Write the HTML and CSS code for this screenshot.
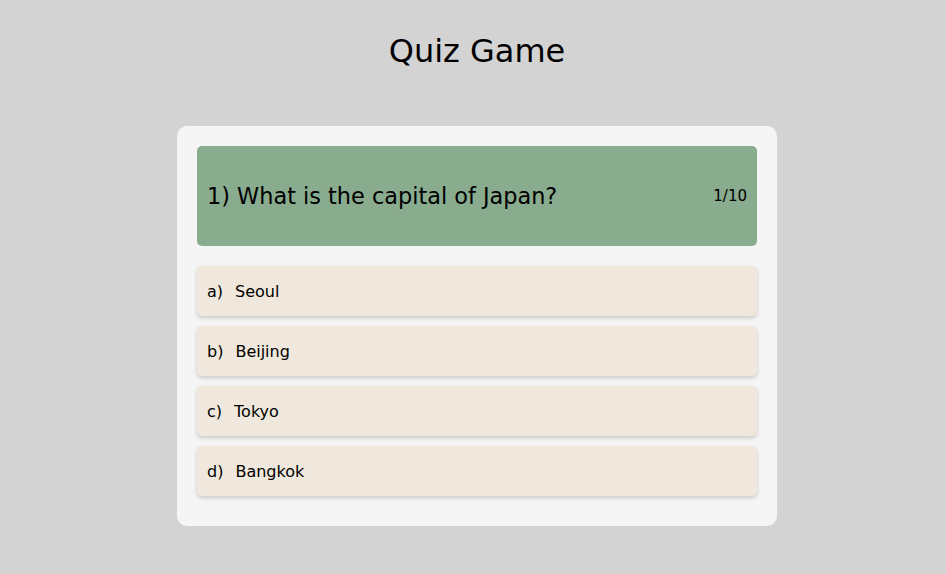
FILE: index.html
```html
<!DOCTYPE html>
<html>
<head>
<meta charset="utf-8">
<link rel="stylesheet" href="styles.css">
</head>
<body>
<h1 class="title">Quiz Game</h1>
<div class="card">
  <div class="question">
    <span class="q-text">1) What is the capital of Japan?</span>
    <span class="q-count">1/10</span>
  </div>
  <div class="options">
    <div class="option"><span class="letter">a)</span><span>Seoul</span></div>
    <div class="option"><span class="letter">b)</span><span>Beijing</span></div>
    <div class="option"><span class="letter">c)</span><span>Tokyo</span></div>
    <div class="option"><span class="letter">d)</span><span>Bangkok</span></div>
  </div>
</div>
</body>
</html>
```
FILE: styles.css
```css
html, body {
  margin: 0;
  padding: 0;
}
body {
  background: #d3d3d3;
  font-family: "DejaVu Sans", sans-serif;
  color: #000;
  display: flex;
  flex-direction: column;
  align-items: center;
  padding-left: 8px;
  min-height: 574px;
  box-sizing: border-box;
}
.title {
  margin: 0;
  padding-top: 31px;
  height: 126px;
  box-sizing: border-box;
  font-size: 32px;
  font-weight: 400;
  line-height: 40px;
  color: #000;
}
.card {
  width: 600px;
  height: 400px;
  box-sizing: border-box;
  background: #f5f5f5;
  border-radius: 10px;
  padding: 20px;
  display: flex;
  flex-direction: column;
  gap: 20px;
}
.question {
  height: 100px;
  background: #89ab8e;
  border-radius: 5px;
  display: flex;
  align-items: center;
  justify-content: space-between;
  padding: 0 10px;
  box-sizing: border-box;
}
.q-text {
  font-size: 22.4px;
}
.q-count {
  font-size: 15px;
}
.options {
  display: flex;
  flex-direction: column;
  gap: 10px;
}
.option {
  height: 50px;
  background: #f0e8dc;
  border-radius: 5px;
  box-shadow: 0 2px 4px rgba(0,0,0,0.18);
  display: flex;
  align-items: center;
  padding: 0 10px;
  font-size: 16px;
}
.letter {
  margin-right: 12px;
}
```
